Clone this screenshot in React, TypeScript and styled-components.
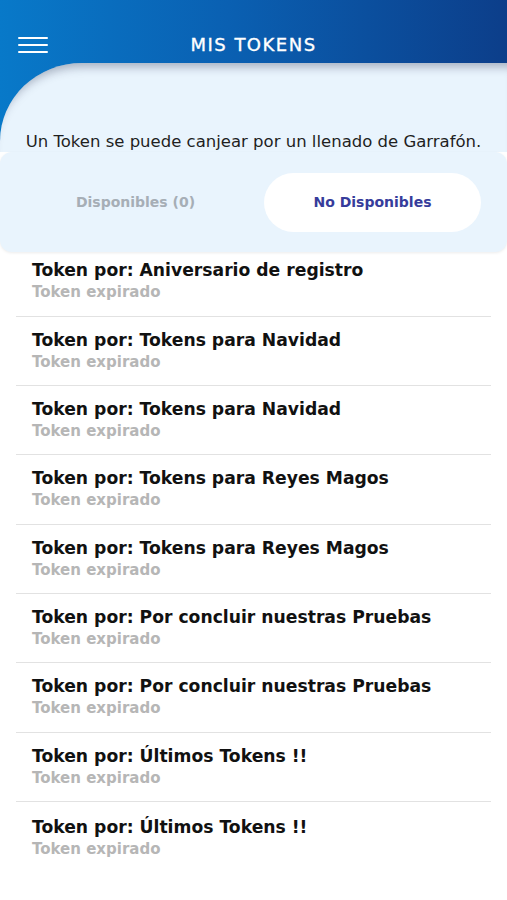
import React from "react";
import styled, { createGlobalStyle } from "styled-components";

const GlobalStyle = createGlobalStyle`
  html, body {
    margin: 0;
    padding: 0;
    background: #ffffff;
  }
  body {
    font-family: "DejaVu Sans", "Noto Sans", sans-serif;
    -webkit-font-smoothing: antialiased;
  }
`;

const Page = styled.div`
  width: 507px;
  min-height: 900px;
  background: #fff;
`;

const Top = styled.div`
  background: linear-gradient(90deg, #0879c9 0%, #0a60b2 45%, #0c3e8a 100%);
`;

const TopBar = styled.div`
  height: 63px;
  padding-top: 27px;
  box-sizing: border-box;
  display: grid;
  grid-template-columns: 64px 1fr 64px;
  align-items: center;
`;

const Burger = styled.button`
  border: 0;
  background: none;
  padding: 0;
  margin-left: 18px;
  width: 30px;
  display: flex;
  flex-direction: column;
  gap: 4.5px;
  span {
    display: block;
    height: 2.5px;
    border-radius: 1px;
    background: #fff;
  }
`;

const Title = styled.h1`
  margin: 0;
  text-align: center;
  color: #fff;
  font-size: 18px;
  font-weight: 400;
  letter-spacing: 1.5px;
  line-height: 22px;
  -webkit-text-stroke: 0.35px #fff;
`;

const Intro = styled.div`
  height: 89px;
  background: #e9f4fd;
  border-top-left-radius: 82px 78px;
  box-shadow: inset 0 12px 10px -8px rgba(40, 50, 80, 0.35);
  display: flex;
  align-items: flex-end;
  justify-content: center;
`;

const IntroText = styled.p`
  margin: 0;
  color: #1f1f1f;
  font-size: 16.5px;
  line-height: 20px;
  position: relative;
  z-index: 1;
`;

const TabCard = styled.div`
  height: 100px;
  background: #e9f4fd;
  border-radius: 12px;
  box-shadow: 0 1px 3px rgba(0, 0, 0, 0.08);
  display: grid;
  grid-template-columns: 217px 217px;
  column-gap: 20px;
  align-items: center;
  padding: 0 26px 0 27px;
`;

const Tab = styled.button<{ $active?: boolean }>`
  height: 59px;
  border: 0;
  border-radius: 30px;
  background: ${(p) => (p.$active ? "#ffffff" : "transparent")};
  color: ${(p) => (p.$active ? "#363c9b" : "#a6aeb6")};
  font-family: "DejaVu Sans", "Noto Sans", sans-serif;
  font-size: 14px;
  font-weight: 700;
  cursor: pointer;
`;

const List = styled.div`
  padding: 0 16px;
`;

const Row = styled.div`
  height: 69.4px;
  padding: 11px 16px 0;
  box-sizing: border-box;
  border-bottom: 1.5px solid #e2e2e2;
  &:first-child {
    height: 64.5px;
    padding-top: 6px;
  }
  &:last-child {
    padding-top: 13px;
    border-bottom: 0;
  }
`;

const RowTitle = styled.div`
  color: #111;
  font-size: 17.2px;
  font-weight: 700;
  line-height: 24px;
`;

const RowSub = styled.div`
  color: #b6b6b6;
  font-size: 15px;
  font-weight: 700;
  line-height: 20px;
`;

const tokens = [
  "Aniversario de registro",
  "Tokens para Navidad",
  "Tokens para Navidad",
  "Tokens para Reyes Magos",
  "Tokens para Reyes Magos",
  "Por concluir nuestras Pruebas",
  "Por concluir nuestras Pruebas",
  "Últimos Tokens !!",
  "Últimos Tokens !!",
];

export default function App() {
  return (
    <Page>
      <GlobalStyle />
      <Top>
        <TopBar>
          <Burger aria-label="menu">
            <span />
            <span />
            <span />
          </Burger>
          <Title>MIS TOKENS</Title>
          <div />
        </TopBar>
        <Intro>
          <IntroText>Un Token se puede canjear por un llenado de Garrafón.</IntroText>
        </Intro>
      </Top>
      <TabCard>
        <Tab>Disponibles (0)</Tab>
        <Tab $active>No Disponibles</Tab>
      </TabCard>
      <List>
        {tokens.map((t, i) => (
          <Row key={i}>
            <RowTitle>Token por: {t}</RowTitle>
            <RowSub>Token expirado</RowSub>
          </Row>
        ))}
      </List>
    </Page>
  );
}
